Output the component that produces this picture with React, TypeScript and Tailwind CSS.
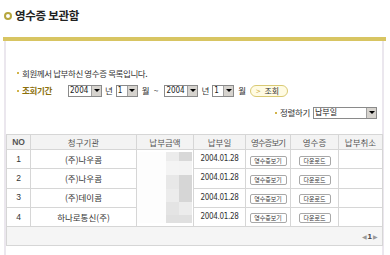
import React from 'react';

const KR = { fontFamily: '"Noto Sans CJK KR", "Liberation Sans", sans-serif' };

const rows = [
  { no: 1, org: '(주)나우콤', date: '2004.01.28' },
  { no: 2, org: '(주)나우콤', date: '2004.01.28' },
  { no: 3, org: '(주)데이콤', date: '2004.01.28' },
  { no: 4, org: '하나로통신(주)', date: '2004.01.28' },
];

// 모자이크 처리된 납부금액 영역
const mosaic = [
  { h: 'h-[9px]', a: 'bg-[#ececec]', b: 'bg-[#d8d8d8]' },
  { h: 'h-[14px]', a: 'bg-[#f4f4f4]', b: 'bg-[#f3f3f3]' },
  { h: 'h-[14px]', a: 'bg-[#e8e8e8]', b: 'bg-[#d6d6d6]' },
  { h: 'h-[13px]', a: 'bg-[#ececec]', b: 'bg-[#d6d6d6]' },
  { h: 'h-[13px]', a: 'bg-[#e4e4e4]', b: 'bg-[#ececec]' },
  { h: 'h-[8px]', a: 'bg-[#e0e0e0]', b: 'bg-[#e0e0e0]' },
];

function Bullet() {
  return <span className="inline-block w-[2px] h-[2px] bg-[#d2b44a] mr-[3px]" />;
}

function Select({ value, width }: { value: string; width: string }) {
  return (
    <div className={`${width} h-[12px] flex border border-[#8a8a8a] bg-white`}>
      <span
        className="flex-1 text-[8px] leading-[10px] pl-[1px] text-[#222] overflow-hidden"
        style={{ fontFamily: '"Liberation Sans Narrow", "DejaVu Sans Condensed", "Noto Sans CJK KR", sans-serif' }}
      >
        {value}
      </span>
      <span className="w-[10px] h-[10px] bg-[#d6d3ce] border-l border-[#a0a0a0] flex items-center justify-center">
        <span className="w-0 h-0 border-l-[3px] border-r-[3px] border-t-[3px] border-l-transparent border-r-transparent border-t-black" />
      </span>
    </div>
  );
}

function SmallBtn({ label, width }: { label: string; width: string }) {
  return (
    <span
      className={`${width} h-[10px] inline-flex items-center justify-center border border-[#a8a8a8] rounded-[2px] bg-white text-[6px] leading-none text-[#333]`}
    >
      {label}
    </span>
  );
}

export default function App() {
  return (
    <div className="w-[390px] h-[255px] overflow-hidden bg-white text-[#333]" style={KR}>
      {/* 타이틀 */}
      <div className="h-[32px] flex items-center pl-[4px] gap-[3px]">
        <span className="w-[8px] h-[8px] rounded-full border-[2px] border-[#b6a63e]" />
        <h1 className="text-[11.5px] font-bold text-[#222] tracking-[-0.3px]">영수증 보관함</h1>
      </div>

      <div className="mt-[5px] ml-[3px] w-[383px] h-[4px] bg-[#d8c562]" />

      {/* 본문 박스 */}
      <div className="ml-[4px] w-[380px] h-[230px] border-l-2 border-r-2 border-[#ebe7ee] pt-[25px]">
        <div className="h-[14px] flex items-center pl-[11px] text-[8.5px] tracking-[-0.4px]">
          <Bullet />
          회원께서 납부하신 영수증 목록입니다.
        </div>

        <div className="mt-[4px] h-[13px] flex items-center pl-[11px] text-[8.5px]">
          <Bullet />
          <span className="font-bold text-[#8c700c] tracking-[-0.3px] w-[46px]">조회기간</span>
          <Select value="2004" width="w-[34px]" />
          <span className="mx-[3px]">년</span>
          <Select value="1" width="w-[22px]" />
          <span className="mx-[4px]">월</span>
          <span className="mr-[6px]">~</span>
          <Select value="2004" width="w-[34px]" />
          <span className="mx-[3px]">년</span>
          <Select value="1" width="w-[22px]" />
          <span className="mx-[4px]">월</span>
          <span className="w-[38px] h-[12px] rounded-full border border-[#d9ca74] bg-[#fffbe3] flex items-center pl-[5px] text-[8px] leading-none">
            <span className="text-[#c9a93a] mr-[4px]">&gt;</span>조회
          </span>
        </div>

        <div className="mt-[9px] h-[13px] flex items-center justify-end pr-[5px] text-[8.5px]">
          <Bullet />
          <span className="mr-[3px] tracking-[-0.3px]">정렬하기</span>
          <Select value="납부일" width="w-[64px]" />
        </div>

        {/* 목록 */}
        <table className="mt-[15px] w-[376px] table-fixed border-collapse text-[8.5px]">
          <colgroup>
            <col className="w-[24px]" />
            <col className="w-[106px]" />
            <col className="w-[57px]" />
            <col className="w-[52px]" />
            <col className="w-[45px]" />
            <col className="w-[48px]" />
            <col className="w-[44px]" />
          </colgroup>
          <thead>
            <tr className="h-[15px] bg-[#f3f3f3] text-[#555]">
              <th className="border border-[#d6d6d6] font-bold" style={{ fontFamily: '"Liberation Sans", sans-serif' }}>NO</th>
              <th className="border border-[#d6d6d6] font-normal">청구기관</th>
              <th className="border border-[#d6d6d6] font-normal">납부금액</th>
              <th className="border border-[#d6d6d6] font-normal">납부일</th>
              <th className="border border-[#d6d6d6] font-normal tracking-[-1px] whitespace-nowrap">영수증보기</th>
              <th className="border border-[#d6d6d6] font-normal">영수증</th>
              <th className="border border-[#d6d6d6] font-normal">납부취소</th>
            </tr>
          </thead>
          <tbody>
            {rows.map((r, i) => (
              <tr key={r.no} className="h-[19px]">
                <td className="border border-[#d6d6d6] text-center" style={{ fontFamily: '"Liberation Sans", sans-serif' }}>{r.no}</td>
                <td className="border border-[#d6d6d6] text-center">{r.org}</td>
                {i === 0 && (
                  <td rowSpan={4} className="border border-[#d6d6d6] p-0 align-top">
                    <div className="h-[76px] flex pt-[2px] pr-[1px]">
                      <div className="flex-1 bg-[#fdfdfd] mb-[3px]" />
                      {['a', 'b'].map((k) => (
                        <div key={k} className="w-[13px] flex flex-col">
                          {mosaic.map((m, j) => (
                            <div key={j} className={`${m.h} ${k === 'a' ? m.a : m.b}`} />
                          ))}
                        </div>
                      ))}
                    </div>
                  </td>
                )}
                <td
                  className="border border-[#d6d6d6] text-center text-[8px] tracking-[-0.3px]"
                  style={{ fontFamily: '"Liberation Sans Narrow", "DejaVu Sans Condensed", "Liberation Sans", sans-serif' }}
                >
                  {r.date}
                </td>
                <td className="border border-[#d6d6d6] text-center">
                  <SmallBtn label="영수증보기" width="w-[37px]" />
                </td>
                <td className="border border-[#d6d6d6] text-center">
                  <SmallBtn label="다운로드" width="w-[32px]" />
                </td>
                <td className="border border-[#d6d6d6]" />
              </tr>
            ))}
            <tr className="h-[19px] bg-[#f5f5f5]">
              <td colSpan={7} className="border border-[#d6d6d6] text-right pr-[4px]">
                <span className="inline-flex items-center gap-[1px] text-[8px] text-[#444]" style={{ fontFamily: '"Liberation Sans", sans-serif' }}>
                  <span className="text-[#999] text-[6px]">◀</span>
                  <b>1</b>
                  <span className="text-[#999] text-[6px]">▶</span>
                </span>
              </td>
            </tr>
          </tbody>
        </table>
      </div>
    </div>
  );
}
